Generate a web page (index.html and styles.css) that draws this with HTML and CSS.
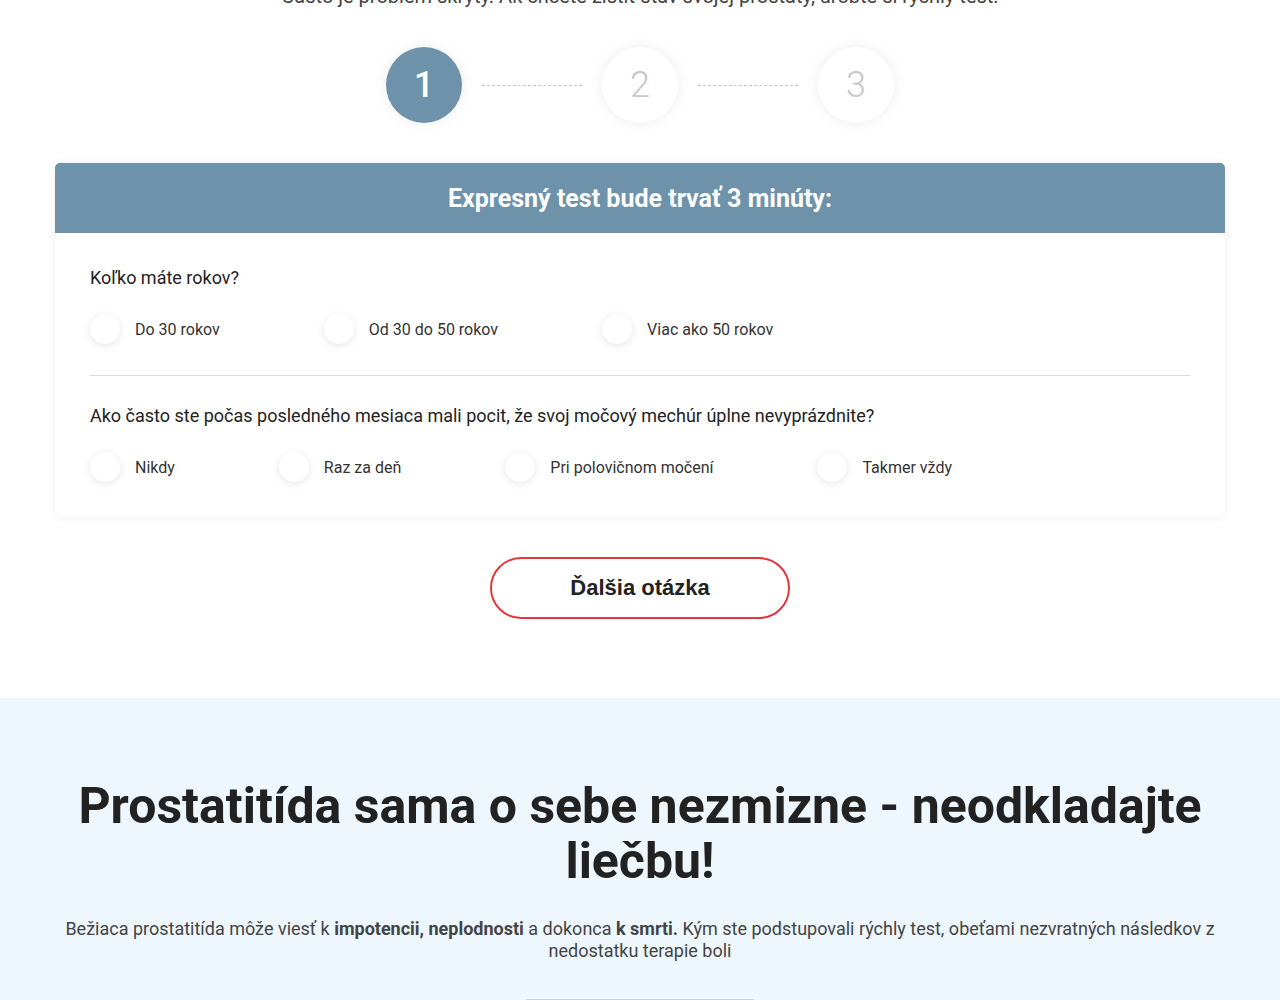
FILE: index.html
```html
<!DOCTYPE html>
<html lang="sk">
<head>
<meta charset="utf-8">
<title>Expresný test</title>
<link rel="stylesheet" href="styles.css">
</head>
<body>
<section class="test">
  <p class="intro">Často je problém skrytý. Ak chcete zistiť stav svojej prostaty, urobte si rýchly test.</p>
  <div class="steps">
    <div class="step active">1</div>
    <div class="step-line"></div>
    <div class="step">2</div>
    <div class="step-line"></div>
    <div class="step">3</div>
  </div>
  <div class="card">
    <div class="card-head">Expresný test bude trvať 3 minúty:</div>
    <div class="card-body">
      <div class="question">
        <div class="q-title">Koľko máte rokov?</div>
        <div class="options">
          <label class="option"><span class="radio"></span><span class="opt-text">Do 30 rokov</span></label>
          <label class="option"><span class="radio"></span><span class="opt-text">Od 30 do 50 rokov</span></label>
          <label class="option"><span class="radio"></span><span class="opt-text">Viac ako 50 rokov</span></label>
        </div>
      </div>
      <div class="divider"></div>
      <div class="question">
        <div class="q-title">Ako často ste počas posledného mesiaca mali pocit, že svoj močový mechúr úplne nevyprázdnite?</div>
        <div class="options">
          <label class="option"><span class="radio"></span><span class="opt-text">Nikdy</span></label>
          <label class="option"><span class="radio"></span><span class="opt-text">Raz za deň</span></label>
          <label class="option"><span class="radio"></span><span class="opt-text">Pri polovičnom močení</span></label>
          <label class="option"><span class="radio"></span><span class="opt-text">Takmer vždy</span></label>
        </div>
      </div>
    </div>
  </div>
  <div class="btn-wrap">
    <button class="btn-next">Ďalšia otázka</button>
  </div>
</section>
<section class="warning">
  <h2 class="warn-title">Prostatitída sama o sebe nezmizne - neodkladajte liečbu!</h2>
  <p class="warn-text">Bežiaca prostatitída môže viesť k <b>impotencii, neplodnosti</b> a dokonca <b>k smrti.</b> Kým ste podstupovali rýchly test, obeťami nezvratných následkov z nedostatku terapie boli</p>
  <div class="counter-box"></div>
</section>
</body>
</html>
```

FILE: styles.css
```css
* { box-sizing: border-box; }
html, body { margin: 0; padding: 0; }
body {
  font-family: Roboto, "Noto Sans", Arial, sans-serif;
  color: #222;
  background: #fff;
  overflow: hidden;
}
.test {
  width: 1170px;
  margin: 0 auto;
}
.intro {
  margin: -16px 0 0;
  font-size: 20px;
  line-height: 24px;
  color: #444;
  text-align: center;
}
.steps {
  display: flex;
  justify-content: center;
  align-items: center;
  margin-top: 39px;
  gap: 20px;
}
.step {
  width: 76px;
  height: 76px;
  border-radius: 50%;
  background: #fff;
  box-shadow: 0 0 14px rgba(0, 0, 0, 0.08);
  display: flex;
  align-items: center;
  justify-content: center;
  font-size: 36px;
  font-weight: 300;
  color: #c8c8c8;
}
.step.active {
  background: #6d92aa;
  color: #fff;
  font-weight: 500;
}
.step-line {
  width: 100px;
  border-top: 1px dashed #c6c6c6;
}
.card {
  margin-top: 40px;
  background: #fff;
  border-radius: 5px;
  box-shadow: 0 0 10px rgba(0, 0, 0, 0.07);
  overflow: hidden;
}
.card-head {
  height: 70px;
  background: #6d92aa;
  color: #fff;
  font-size: 25px;
  font-weight: 700;
  display: flex;
  align-items: center;
  justify-content: center;
}
.card-body {
  padding: 34px 35px 35px;
}
.q-title {
  font-size: 18px;
  line-height: 22px;
  color: #222;
  margin-bottom: 25px;
}
.options {
  display: flex;
  gap: 104px;
}
.option {
  display: flex;
  align-items: center;
  gap: 15px;
}
.radio {
  width: 30px;
  height: 30px;
  border-radius: 50%;
  background: #fff;
  box-shadow: 0 2px 8px rgba(0, 0, 0, 0.10);
}
.opt-text {
  font-size: 16px;
  color: #333;
}
.divider {
  border-top: 1px solid #ddd;
  margin: 31px 0 29px;
}
.btn-wrap {
  display: flex;
  justify-content: center;
  margin: 40px 0 79px;
}
.btn-next {
  width: 300px;
  height: 62px;
  border: 2px solid #e2383d;
  border-radius: 31px;
  background: #fff;
  font-family: "Liberation Sans", Arial, sans-serif;
  font-weight: 700;
  font-size: 22px;
  color: #222;
}
.warning {
  background: #eef7fe;
  padding: 81px 55px 0;
  text-align: center;
}
.warn-title {
  margin: 0;
  font-size: 50px;
  line-height: 55px;
  font-weight: 700;
  color: #222;
}
.warn-text {
  margin: 29px 0 0;
  font-size: 18px;
  line-height: 22px;
  color: #444;
}
.counter-box {
  width: 234px;
  height: 60px;
  margin: 37px auto 0;
  border: 1px solid #c9d2d8;
  border-radius: 5px;
  background: #fff;
}
```
